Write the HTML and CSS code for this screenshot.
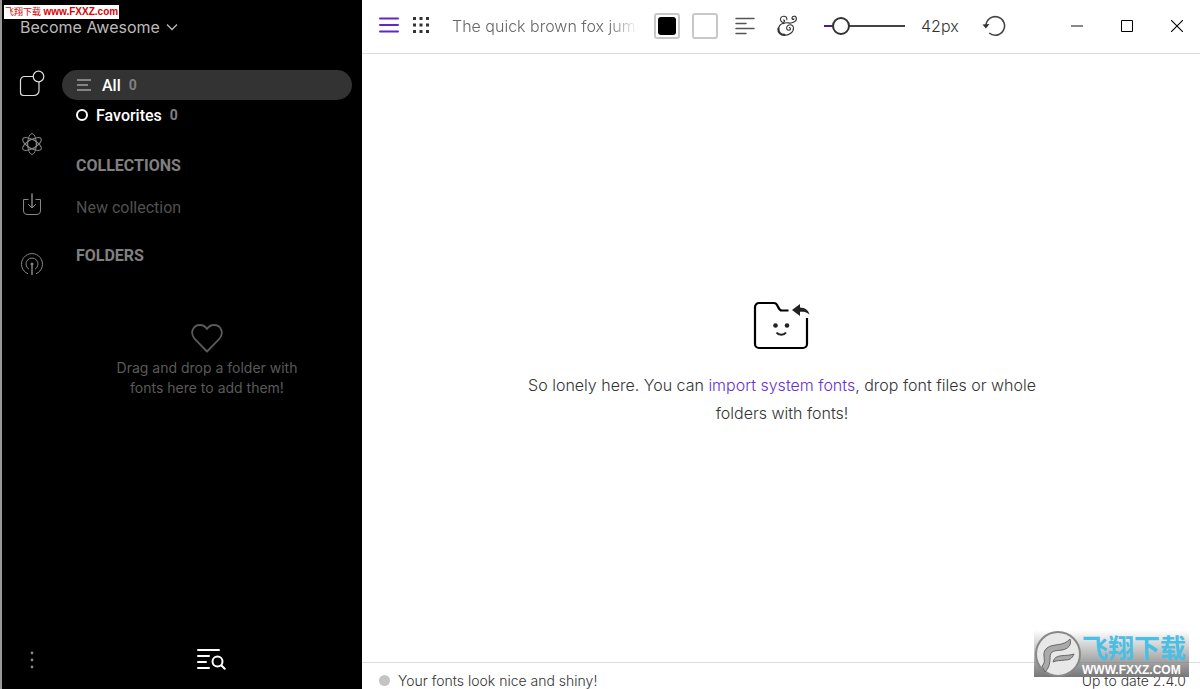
FILE: index.html
```html
<!DOCTYPE html>
<html lang="en">
<head>
<meta charset="utf-8">
<title>Font manager</title>
<link rel="stylesheet" href="styles.css">
</head>
<body>
<div class="app">
  <aside class="sidebar">
    <button class="workspace" type="button">Become Awesome
      <svg width="12" height="8" viewBox="0 0 12 8"><path d="M1 1.500l5 5 5-5" fill="none" stroke="currentColor" stroke-width="1.300"/></svg>
    </button>
    <div class="side-body">
      <nav class="rail" aria-label="Sections">
        <button type="button" aria-label="Library" class="active">
          <svg width="28" height="28" viewBox="0 0 28 28"><g fill="none" stroke="currentColor" stroke-width="1.200"><path d="M16 6.500H6.500a4 4 0 0 0-4 4V22.500a3 3 0 0 0 3 3H16a5 5 0 0 0 5-5V11.500"/><circle cx="20.500" cy="6.500" r="5.300"/></g></svg>
        </button>
        <button type="button" aria-label="Discover">
          <svg width="24" height="24" viewBox="0 0 24 24"><g fill="none" stroke="currentColor" stroke-width="1"><ellipse cx="12" cy="12" rx="4.300" ry="10.500"/><ellipse cx="12" cy="12" rx="4.300" ry="10.500" transform="rotate(60 12 12)"/><ellipse cx="12" cy="12" rx="4.300" ry="10.500" transform="rotate(120 12 12)"/><circle cx="12" cy="12" r="4.800"/></g></svg>
        </button>
        <button type="button" aria-label="Downloads">
          <svg width="24" height="24" viewBox="0 0 24 24"><g fill="none" stroke="currentColor" stroke-width="1"><path d="M8.500 7.500h-5V19a3.500 3.500 0 0 0 3.500 3.500h10a3.500 3.500 0 0 0 3.500-3.500V7.500h-5M8 12l4 4 4-4"/><path d="M12 1.500V16" stroke-width="1.500"/></g></svg>
        </button>
        <button type="button" aria-label="Broadcast">
          <svg width="24" height="24" viewBox="0 0 24 24"><g fill="none" stroke="currentColor" stroke-width="1"><path d="M8 21.800a10.500 10.500 0 1 1 8 0"/><path d="M9 17.200a6 6 0 1 1 6 0"/><path d="M12 12v11" stroke-width="1.500"/></g><circle cx="12" cy="12" r="1.500" fill="currentColor"/></svg>
        </button>
        <button type="button" aria-label="More" class="more">
          <svg width="24" height="24" viewBox="0 0 24 24" fill="currentColor"><circle cx="12" cy="5" r="1.400"/><circle cx="12" cy="12" r="1.400"/><circle cx="12" cy="19" r="1.400"/></svg>
        </button>
      </nav>
      <div class="library">
        <a class="item selected" href="#all">
          <svg width="16" height="14" viewBox="0 0 16 14"><path d="M1 2h14M1 7h11M1 12h14" stroke="#a0a0a0" stroke-width="1.500" fill="none"/></svg>
          <span class="name all">All</span><span class="count">0</span>
        </a>
        <a class="item" href="#favorites">
          <svg width="12" height="14" viewBox="0 0 12 14"><circle cx="6" cy="7" r="5" stroke="#fff" stroke-width="2" fill="none"/></svg>
          <span class="name">Favorites</span><span class="count">0</span>
        </a>
        <h2 class="collections">Collections</h2>
        <input class="new" type="text" placeholder="New collection" aria-label="New collection">
        <h2 class="folders">Folders</h2>
        <div class="dropzone">
          <svg width="32" height="30" viewBox="0 0 32 30"><path d="M16 28.500L3.900 16.100C-1.800 9.500 2.300 2 9 2c3.200 0 5.600 1.800 7 4 1.400-2.200 3.800-4 7-4 6.700 0 10.800 7.500 5.100 14.100z" fill="none" stroke="currentColor" stroke-width="1.800" stroke-linejoin="round"/></svg>
          <p>Drag and drop a folder with fonts here to add them!</p>
        </div>
        <button class="find" type="button" aria-label="Search fonts">
          <svg width="30" height="24" viewBox="0 0 30 24"><g fill="none" stroke="#fff" stroke-width="2" stroke-linecap="round"><path d="M2 3h21M2 9h11M2 15h8M2 21h11"/><circle cx="21.500" cy="14.500" r="5"/><path d="M25.500 18.500l3.200 3.200"/></g></svg>
        </button>
      </div>
    </div>
  </aside>
  <main class="main">
    <header class="toolbar">
      <button type="button" aria-label="List view" class="list">
        <svg width="20" height="18" viewBox="0 0 20 18"><path d="M1 1.500h18M1 8h18M1 14.500h18" stroke="#6426c8" stroke-width="2" stroke-linecap="round"/></svg>
      </button>
      <button type="button" aria-label="Grid view" class="grid">
        <svg width="18" height="18" viewBox="0 0 18 18"><path d="M1 1.500h16M1 8h16M1 14.500h16" stroke="#333" stroke-width="3" stroke-dasharray="3 3.500"/></svg>
      </button>
      <input class="sample" type="text" placeholder="The quick brown fox jumps over the lazy dog" aria-label="Sample text">
      <button type="button" class="swatch" aria-label="Text color"><span class="ink"></span></button>
      <button type="button" class="swatch paper" aria-label="Background color"></button>
      <button type="button" aria-label="Align left" class="align">
        <svg width="20" height="18" viewBox="0 0 20 18"><path d="M1 1.500h18M1 6.500h10M1 11.500h18M1 16.500h10" stroke="#555" stroke-width="1.500" stroke-linecap="round"/></svg>
      </button>
      <button type="button" aria-label="Font features" class="amp">
        <svg width="22" height="22" viewBox="0 0 22 22"><g fill="none" stroke="#333" stroke-linecap="round"><path d="M10.800 4.800C11.300 2.500 9.800 1.200 7.800 1.200C5 1.200 3.800 3.800 4.800 5.800C5.600 7.500 7.500 7.700 8.300 6.800C9 6 8.400 4.800 7.500 5.100" stroke-width="1.100"/><path d="M7.300 8.200C4 9.200 2.600 11.500 2.500 14" stroke-width="1.200"/><path d="M2.400 13.500C2 17.500 5 20 8.500 19.800" stroke-width="2.200"/><path d="M8 20.300C13 20.500 17.800 17 17.500 13C17.300 10 14.300 9.200 12.300 10.300C9.800 11.700 10.200 15.300 12.700 15.300C14.700 15.300 15 12.800 13.400 12.600" stroke-width="1.100"/><path d="M7.500 8.500C11 6.800 12 8.300 15 8C18.800 7.600 21 5.300 20.300 2.800C19.500 .6 16.300 .8 16 2.800C15.800 4.500 17.600 5 18 3.800" stroke-width="1.200"/></g></svg>
      </button>
      <input class="size" type="range" min="0" max="330" value="42" aria-label="Font size">
      <output class="px">42px</output>
      <button type="button" aria-label="Reset" class="reset">
        <svg width="24" height="22" viewBox="0 0 24 22"><path d="M4 10a9.300 9.300 0 1 1 3.200 8" fill="none" stroke="#444" stroke-width="1.600"/><path d="M.5 9.500l3.300 4L7.500 9z" fill="#333"/></svg>
      </button>
      <div class="window">
        <button type="button" aria-label="Minimize"><svg width="12" height="12" viewBox="0 0 12 12"><path d="M0 6h12" stroke="#888" stroke-width="2"/></svg></button>
        <button type="button" aria-label="Maximize"><svg width="12" height="12" viewBox="0 0 12 12"><path d="M.5.5h11v11H.5z" fill="none" stroke="#000"/></svg></button>
        <button type="button" aria-label="Close"><svg width="12" height="12" viewBox="0 0 12 12"><path d="M0 0l12 12M12 0L0 12" stroke="#000" stroke-width="1.100"/></svg></button>
      </div>
    </header>
    <section class="empty">
      <svg width="58" height="50" viewBox="0 0 58 50"><path d="M35.500 9.500H29c-5 0-3-7.500-8-7.500H6a4 4 0 0 0-4 4v37a4 4 0 0 0 4 4h44a4 4 0 0 0 4-4V17" fill="none" stroke="#000" stroke-width="2.200"/><path d="M39 9l8-6v3.500c5 .3 8 2 9.500 7-3-2.700-6-3-9.500-2.800V15z" fill="#222"/><circle cx="22.500" cy="24.500" r="2.300" fill="#222"/><circle cx="34" cy="24.500" r="2.300" fill="#222"/><path d="M23.500 31.500c2 3 7.500 3 9.500 0" fill="none" stroke="#222" stroke-width="2"/></svg>
      <p>So lonely here. You can <a href="#import">import system fonts</a>, drop font files or whole folders with fonts!</p>
    </section>
    <footer class="status"><span class="dot"></span><span>Your fonts look nice and shiny!</span><span class="version">Up to date 2.4.0</span></footer>
  </main>
</div>
<div class="tag">飞翔下载 <b>www.FXXZ.com</b></div>
<div class="badge">
  <svg width="48" height="48" viewBox="0 0 48 48"><circle cx="24" cy="24" r="22" fill="#e8e8e8" stroke="#888" stroke-width="2"/><g fill="#aaa" stroke="#666" stroke-width="1"><path d="M8 36C14 31 6 24 13 18c6-5 16-1 23-9 2 6-2 10-8 11-7 1-12 0-12 8 0 7-2 11-5 14z"/><path d="M19 32c2-9 13-5 21-8-2 5-5 6-9 6-5 1-8 0-12 2z"/></g></svg>
  <div class="badge-text"><span class="badge-name">飞翔下载</span><span class="badge-url">WWW.FXXZ.COM</span></div>
</div>
</body>
</html>
```
FILE: styles.css
```css
* { box-sizing: border-box; }
body { margin: 0; font-family: Inter, "Liberation Sans", sans-serif; color: #333; background: #fff; }
button { border: 0; padding: 0; margin: 0; background: none; color: inherit; font: inherit; display: flex; align-items: center; justify-content: center; flex: none; }
input { border: 0; padding: 0; margin: 0; background: none; font: inherit; outline: 0; }
a { text-decoration: none; }
svg { display: block; flex: none; }
.app { display: flex; height: 100vh; overflow: hidden; }

.sidebar { flex: none; width: 362px; display: flex; flex-direction: column; background: #000; border-left: 2px solid #999; color: #fff; }
.workspace { align-self: flex-start; gap: 6px; height: 54px; padding-left: 18px; font-size: 16px; color: #bbb; }
.side-body { flex: 1; display: flex; }
.rail { width: 60px; display: flex; flex-direction: column; align-items: center; padding-bottom: 11px; color: #858585; }
.rail button { width: 60px; height: 60px; }
.rail .active { color: #ddd; }
.rail .more { margin-top: auto; height: 36px; }
.library { flex: 1; display: flex; flex-direction: column; padding: 16px 10px 18px 0; font-family: Roboto, "Liberation Sans", sans-serif; }
.item { display: flex; align-items: center; height: 30px; padding-left: 14px; border-radius: 15px; color: #fff; font-size: 16px; font-weight: 500; }
.selected { background: #333; }
.name { margin: 0 8px; }
.all { margin-left: 10px; }
.count { color: #808080; font-size: 14px; font-weight: 700; }
h2 { margin: 0; padding-left: 14px; font-size: 16px; line-height: 20px; font-weight: 700; color: #808080; text-transform: uppercase; }
.collections { margin-top: 26px; }
.new { margin: 20px 0 0 14px; height: 22px; font-size: 16px; color: #fff; }
.new::placeholder { color: #505050; opacity: 1; }
.folders { margin-top: 28px; }
.dropzone { display: flex; flex-direction: column; align-items: center; margin-top: 57px; color: #5a5a5a; font-family: Inter, sans-serif; }
.dropzone p { margin: 5px 0 0; width: 200px; text-align: center; font-size: 14px; line-height: 20px; }
.find { align-self: center; margin-top: auto; margin-left: 8px; }

.main { flex: 1; min-width: 0; display: flex; flex-direction: column; }
.toolbar { flex: none; display: flex; align-items: center; height: 54px; padding: 0 0 2px 17px; border-bottom: 1px solid #ddd; }
.grid { margin-left: 13px; }
.sample { flex: 1; min-width: 0; margin: 0 16px 0 22px; height: 28px; font-size: 16px; font-weight: 300; -webkit-mask-image: linear-gradient(90deg, #000 84%, transparent); mask-image: linear-gradient(90deg, #000 84%, transparent); }
.sample::placeholder { color: #666; opacity: 1; }
.swatch { width: 26px; height: 26px; border: 2px solid #c8c8c8; border-radius: 3px; }
.ink { flex: none; width: 18px; height: 18px; border-radius: 3px; background: #000; }
.paper { margin-left: 12px; }
.align { margin-left: 17px; }
.amp { margin-left: 21px; }
.size { appearance: none; width: 81px; height: 18px; margin-left: 26px; background: linear-gradient(90deg, #4b1a9c 0 10px, #444 10px) center / 100% 2px no-repeat; }
.size::-webkit-slider-thumb { appearance: none; width: 18px; height: 18px; border: 2px solid #333; border-radius: 50%; background: #fff; }
.px { margin-left: 16px; width: 37px; font-size: 16px; font-weight: 300; }
.reset { margin-left: 24px; }
.window { display: flex; gap: 4px; flex: none; margin-left: 48px; }
.window button { width: 46px; height: 40px; }

.empty { flex: 1; display: flex; flex-direction: column; align-items: center; justify-content: center; padding: 12px 0 0 2px; }
.empty p { margin: 20px 0 0; width: 520px; text-align: center; font-size: 16px; line-height: 28px; font-weight: 300; }
.empty a { color: #6a2fd0; }
.status { flex: none; display: flex; align-items: flex-start; height: 27px; padding: 10px 14px 0 17px; border-top: 1px solid #ddd; font-size: 14px; line-height: 16px; font-weight: 300; white-space: nowrap; }
.dot { width: 11px; height: 11px; margin: 2px 8px 0 0; border-radius: 50%; background: #c4c4c4; }
.version { margin-left: auto; }

.tag { position: absolute; left: 4px; top: 5px; padding: 0 1px; background: #fff; color: #e00000; font: 9px/14px "Liberation Sans", "Noto Sans CJK SC", sans-serif; white-space: nowrap; }
.tag b { font-size: 10px; }
.badge { position: absolute; right: 11px; bottom: 12px; width: 155px; height: 47px; display: flex; background: linear-gradient(transparent, #777); }
.badge-text { display: flex; flex-direction: column; align-items: flex-start; white-space: nowrap; }
.badge-name { font: 700 26px/33px "Noto Sans CJK SC", sans-serif; color: #49bfe5; }
.badge-url { font: 700 12px/14px "Liberation Sans", sans-serif; color: #fff; }
```
